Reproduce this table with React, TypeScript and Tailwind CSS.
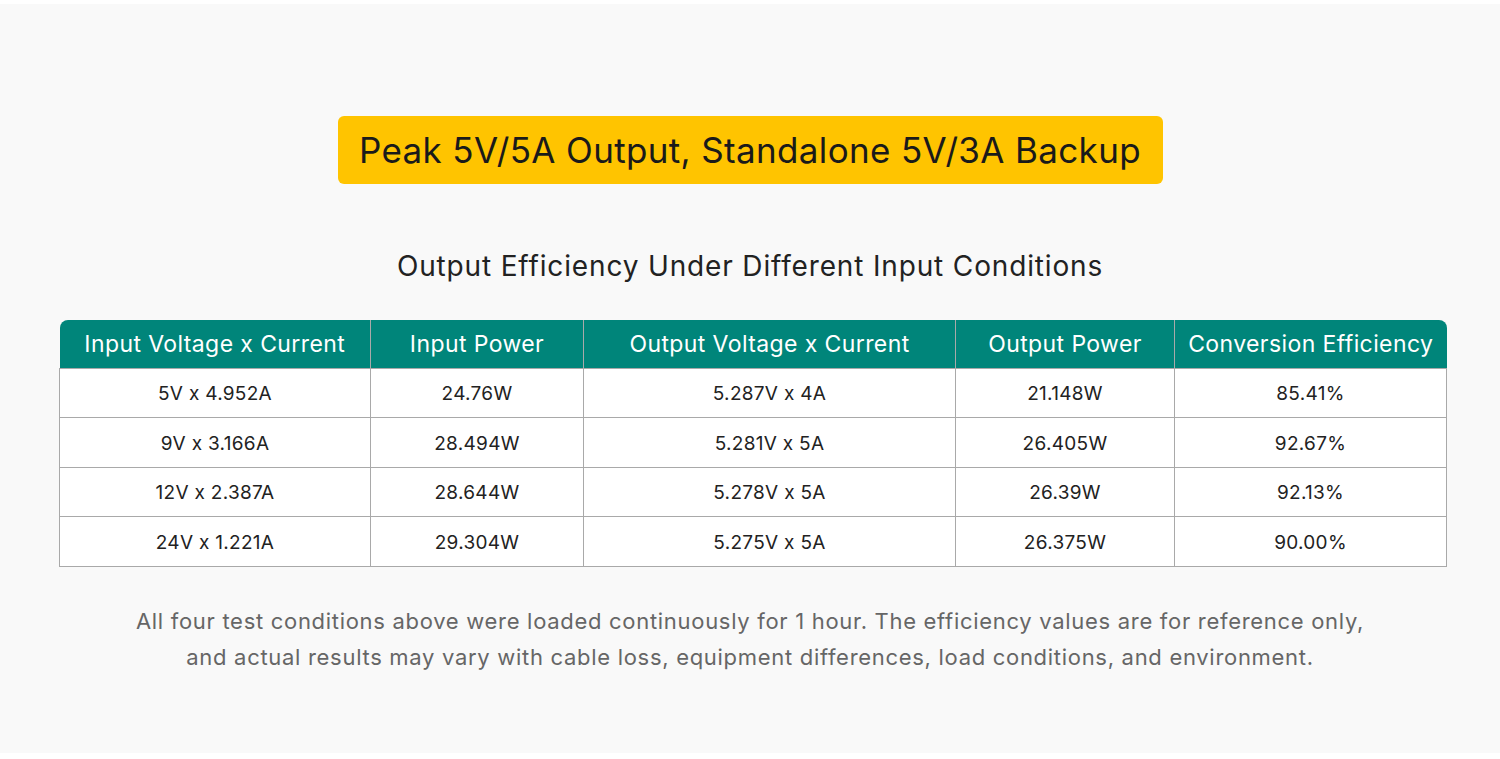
import React from 'react';

const headers = [
  'Input Voltage x Current',
  'Input Power',
  'Output Voltage x Current',
  'Output Power',
  'Conversion Efficiency',
];

const widths = ['w-[311px]', 'w-[213px]', 'w-[372px]', 'w-[219px]', 'w-[272px]'];

const rows = [
  ['5V x 4.952A', '24.76W', '5.287V x 4A', '21.148W', '85.41%'],
  ['9V x 3.166A', '28.494W', '5.281V x 5A', '26.405W', '92.67%'],
  ['12V x 2.387A', '28.644W', '5.278V x 5A', '26.39W', '92.13%'],
  ['24V x 1.221A', '29.304W', '5.275V x 5A', '26.375W', '90.00%'],
];

export default function App() {
  return (
    <div className="bg-white pt-[4px] pb-[6px]" style={{ fontFamily: 'Inter, "Noto Sans", sans-serif' }}>
      <div className="bg-[#f9f9f9] h-[749px] flex flex-col items-center">
        {/* Badge */}
        <div className="mt-[112px] w-[825px] h-[68px] rounded-[6px] bg-[#ffc400] flex items-center justify-center">
          <span className="text-[35px] text-[#1a1a1a] tracking-[0.35px]">
            Peak 5V/5A Output, Standalone 5V/3A Backup
          </span>
        </div>

        {/* Subtitle */}
        <h2 className="mt-[64px] text-[28px] leading-[36px] text-[#222] tracking-[0.85px]">
          Output Efficiency Under Different Input Conditions
        </h2>

        {/* Table */}
        <table className="mt-[36px] ml-[6px] border-collapse text-center">
          <thead>
            <tr className="h-[48px]">
              {headers.map((h, i) => (
                <th
                  key={h}
                  className={`${widths[i]} bg-[#00857a] text-white text-[23px] font-normal tracking-[0.4px] border-x border-[#a9a9a9] first:border-l-0 last:border-r-0 first:rounded-tl-[8px] last:rounded-tr-[8px]`}
                >
                  {h}
                </th>
              ))}
            </tr>
          </thead>
          <tbody>
            {rows.map((r, ri) => (
              <tr key={ri} className="h-[49.5px] bg-white">
                {r.map((c, ci) => (
                  <td
                    key={ci}
                    className="border border-[#a9a9a9] pt-[3px] text-[19px] tracking-[0.3px] text-[#222]"
                  >
                    {c}
                  </td>
                ))}
              </tr>
            ))}
          </tbody>
        </table>

        {/* Footnote */}
        <p className="mt-[36px] text-[22px] leading-[36px] tracking-[0.7px] text-[#666] text-center">
          All four test conditions above were loaded continuously for 1 hour. The efficiency values are for reference only,
          <br />
          and actual results may vary with cable loss, equipment differences, load conditions, and environment.
        </p>
      </div>
    </div>
  );
}
